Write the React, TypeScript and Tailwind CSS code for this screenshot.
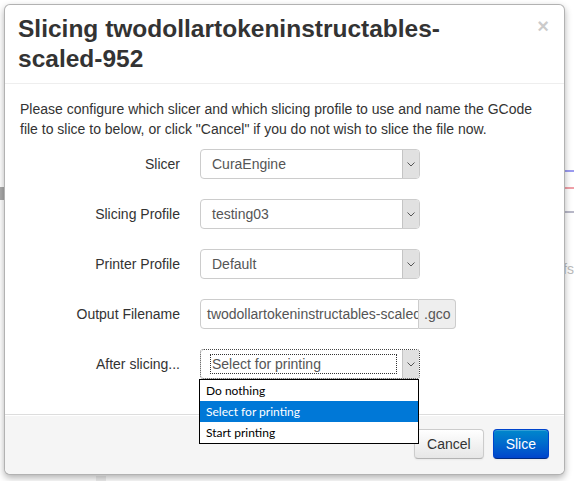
import React from "react";

function Chevron() {
  return (
    <svg width="8" height="5" viewBox="0 0 8 5" className="block">
      <polyline points="0.5,0.5 4,4 7.5,0.5" fill="none" stroke="#555" strokeWidth="1" />
    </svg>
  );
}

function SelectBox({ value, focused = false }: { value: string; focused?: boolean }) {
  return (
    <div
      className={
        "relative w-[220px] h-[30px] rounded-[4px] bg-white text-[14px] leading-[28px] text-[#555] " +
        (focused ? "border border-dotted border-[#444]" : "border border-[#ccc]")
      }
    >
      {focused ? (
        <div className="absolute left-[9px] top-[4px] w-[187px] h-[20px] border border-dotted border-[#333] leading-[18px] pl-[1px]">
          {value}
        </div>
      ) : (
        <div className="pl-[11px]">{value}</div>
      )}
      <div className="absolute right-0 top-0 bottom-0 w-[17px] bg-[#e1e1e1] border-l border-[#c4c4c4] rounded-r-[3px] flex items-center justify-center">
        <Chevron />
      </div>
    </div>
  );
}

function Row({ label, children }: { label: string; children: React.ReactNode }) {
  return (
    <div className="flex mb-[20px] last:mb-0">
      <div className="w-[160px] pt-[5px] text-right text-[14px] leading-[20px] text-[#333] shrink-0">{label}</div>
      <div className="ml-[20px] relative">{children}</div>
    </div>
  );
}

export default function App() {
  return (
    <div
      className="relative w-[574px] h-[481px] overflow-hidden bg-white pt-[4px] pl-[4px]"
      style={{ fontFamily: '"Liberation Sans", Arial, sans-serif' }}
    >
      {/* faint background page */}
      <div className="absolute right-0 top-[170px] w-[10px] h-[2px] bg-[#9b9bf0]" />
      <div className="absolute right-0 top-[187px] w-[10px] h-[2px] bg-[#f0a0a8]" />
      <div className="absolute right-0 top-[211px] w-[10px] h-[2px] bg-[#b8b8c8]" />
      <div className="absolute right-[0px] top-[259px] text-[14px] text-[#bbb]">fs</div>
      <div className="absolute left-0 top-[187px] w-[4px] h-[13px] bg-[#aaa]" />
      <div className="absolute left-[96px] top-[476px] w-[10px] h-[5px] bg-[#eee]" />

      <div className="relative w-[561px] h-[471px] bg-white border border-[rgba(0,0,0,0.3)] rounded-[6px] shadow-[0_3px_7px_rgba(0,0,0,0.3)] flex flex-col">
        {/* header */}
        <div className="px-[15px] py-[9px] border-b border-[#eee]">
          <div className="float-right mt-[2px] text-[20px] leading-[20px] font-bold text-black opacity-20">×</div>
          <h3 className="text-[24.5px] leading-[30px] font-bold text-[#333] m-0 pl-[-2px] -ml-[2px]">
            Slicing twodollartokeninstructables-
            <br />
            scaled-952
          </h3>
        </div>

        {/* body */}
        <div className="p-[15px] flex-1 text-[14px] leading-[20px] text-[#333]">
          <p className="mb-[10px] whitespace-nowrap">
            Please configure which slicer and which slicing profile to use and name the GCode
            <br />
            file to slice to below, or click "Cancel" if you do not wish to slice the file now.
          </p>
          <div className="flex flex-col">
            <Row label="Slicer">
              <SelectBox value="CuraEngine" />
            </Row>
            <Row label="Slicing Profile">
              <SelectBox value="testing03" />
            </Row>
            <Row label="Printer Profile">
              <SelectBox value="Default" />
            </Row>
            <Row label="Output Filename">
              <div className="flex h-[30px]">
                <div className="w-[219px] h-[30px] border border-[#ccc] rounded-l-[4px] bg-white px-[6px] text-[14px] leading-[28px] text-[#555] overflow-hidden whitespace-nowrap">
                  twodollartokeninstructables-scaled-952
                </div>
                <div className="h-[30px] px-[5px] bg-[#eee] border border-l-0 border-[#ccc] rounded-r-[4px] text-[14px] leading-[28px] text-[#555]">
                  .gco
                </div>
              </div>
            </Row>
            <Row label="After slicing...">
              <SelectBox value="Select for printing" focused />
              <div
                className="absolute left-[-1px] top-[30px] w-[220px] border border-black bg-white z-10 text-[12px] text-black"
                style={{ fontFamily: 'Lato, "Noto Sans", sans-serif' }}
              >
                <div className="h-[21px] leading-[21px] pl-[6px]">Do nothing</div>
                <div className="h-[21px] leading-[21px] pl-[6px] bg-[#0078d7] text-white">Select for printing</div>
                <div className="h-[21px] leading-[21px] pl-[6px]">Start printing</div>
              </div>
            </Row>
          </div>
        </div>

        {/* footer */}
        <div className="pt-[14px] pb-[15px] px-[15px] bg-[#f5f5f5] border-t border-[#ddd] rounded-b-[6px] shadow-[inset_0_1px_0_#fff] flex justify-end gap-[9px]">
          <button className="h-[30px] px-[12px] text-[14px] leading-[20px] text-[#333] rounded-[4px] border border-[#ccc] border-b-[#b3b3b3] bg-gradient-to-b from-white to-[#e6e6e6] shadow-[inset_0_1px_0_rgba(255,255,255,0.2),0_1px_2px_rgba(0,0,0,0.05)]">
            Cancel
          </button>
          <button className="h-[30px] px-[12px] text-[14px] leading-[20px] text-white rounded-[4px] border border-[#0044cc] border-b-[#002a80] bg-gradient-to-b from-[#0088cc] to-[#0044cc] shadow-[inset_0_1px_0_rgba(255,255,255,0.2),0_1px_2px_rgba(0,0,0,0.05)]">
            Slice
          </button>
        </div>
      </div>
    </div>
  );
}
